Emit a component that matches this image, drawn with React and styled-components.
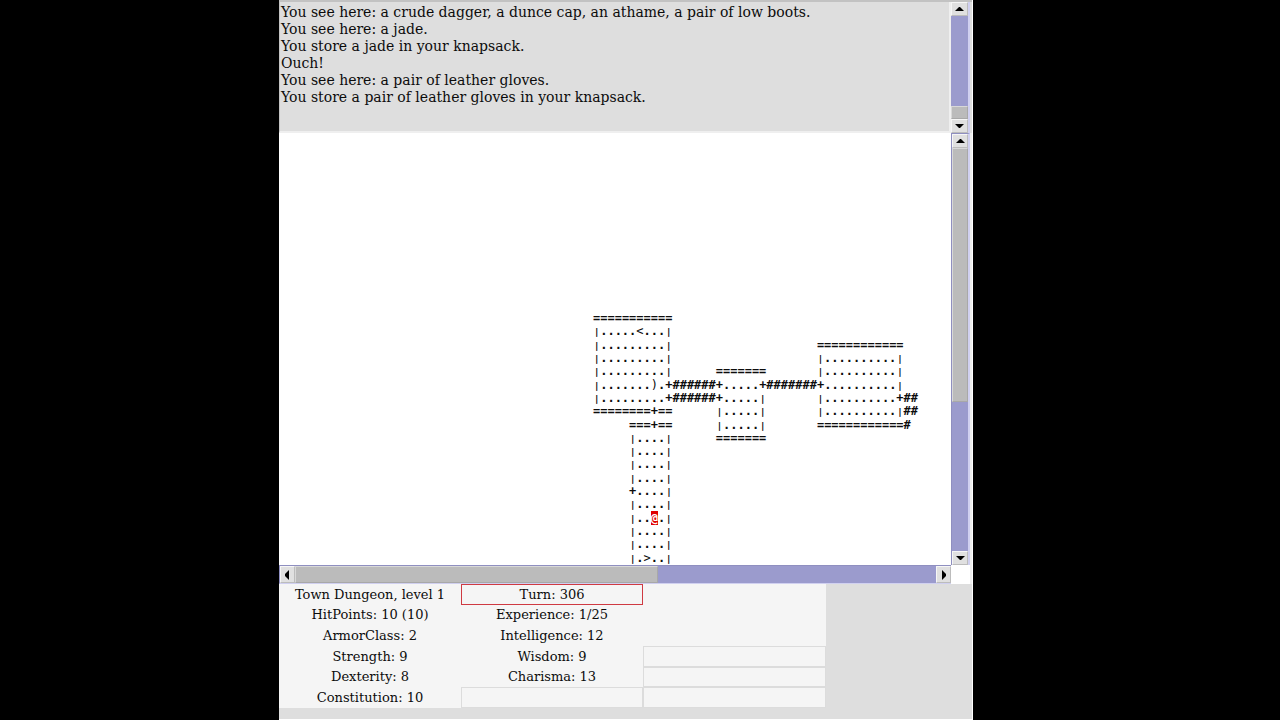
import React from "react";
import styled, { createGlobalStyle } from "styled-components";

const Global = createGlobalStyle`
  * { box-sizing: border-box; }
  body { margin: 0; background: #000; color: #0c0c0c; font-family: "DejaVu Serif", serif; }
`;

const Desktop = styled.div`
  display: grid;
  grid-template-columns: 279fr 694fr 307fr;
  min-height: 100vh;
`;

const GameWindow = styled.main`
  grid-column: 2;
  display: grid;
  grid-template-rows: 133px 1fr 136px;
  background: #dedede;
  border-right: 1px solid #fff;
`;

const MessagePane = styled.section`
  display: flex;
  border-top: 2px solid #c2c2c2;
  background: #dedede;
  padding-right: 2px;
`;

const MessageLog = styled.div`
  flex: 1;
  font-size: 14px;
  line-height: 17px;
  padding: 2px 0 0 1px;
  border-left: 1px solid #c2c2c2;
  border-right: 2px solid #efefef;
  border-bottom: 2px solid #efefef;
`;

const Message = styled.p`
  margin: 0;
  white-space: nowrap;
`;

const MapPane = styled.section`
  display: grid;
  grid-template-columns: 1fr 19px;
  grid-template-rows: 1fr 19px;
  padding-right: 2px;
  background: #efefef;
`;

const MapView = styled.div`
  overflow: hidden;
  height: calc(100vh - 288px);
  background: #fff;
`;

const Dungeon = styled.div`
  display: flex;
  flex-direction: column;
  height: 432px;
  padding: 179px 0 0 314px;
  font-family: "DejaVu Sans Mono", monospace;
  font-size: 12px;
  font-weight: bold;
  line-height: 13px;
`;

const MapRow = styled.div`
  flex: 1;
  white-space: pre;
`;

const Wall = styled.span`
  display: inline-block;
  width: 0.8em;
  font-size: 9px;
  line-height: 9px;
  text-align: center;
`;

const Thin = styled.span`
  font-weight: normal;
`;

const Hero = styled.span`
  background: #e00000;
  color: #fff;
`;

const Corner = styled.div`
  background: #fff;
`;

const Bar = styled.div`
  display: flex;
  flex-direction: ${(p) => (p.$horizontal ? "row" : "column")};
  width: ${(p) => (p.$horizontal ? "auto" : "19px")};
  background: #9b9bcd;
  border: 0 solid #8f8fc0;
  border-width: ${(p) => (p.$flat ? "0" : "1px 0 0 1px")};
  ${(p) => (p.$horizontal ? "border-bottom: 1px solid #d0d0f0;" : "border-right: 2px solid #d0d0f0;")}
`;

const ArrowButton = styled.button`
  flex: none;
  display: flex;
  align-items: center;
  justify-content: center;
  width: ${(p) => (p.$side ? "15px" : "100%")};
  height: ${(p) => (p.$side ? "100%" : "14px")};
  padding: 0;
  background: #e0e0e0;
  border: 1px solid;
  border-color: #f6f6f6 #bcbcbc #bcbcbc #f6f6f6;
`;

const Track = styled.div`
  flex: 1;
  display: flex;
  flex-direction: ${(p) => (p.$horizontal ? "row" : "column")};
`;

const Gap = styled.div`
  flex: ${(p) => p.$share};
`;

const Thumb = styled.div`
  flex: ${(p) => p.$share};
  background: #bbb;
  border: 1px solid;
  border-color: #d8d8d8 #a8a8a8 #a8a8a8 #d8d8d8;
`;

const arrows = {
  up: "M1 7 L5 3 H6 L10 7 Z",
  down: "M1 3 H10 L6 7 H5 Z",
  left: "M7 0 V10 L3 6 V4 Z",
  right: "M4 0 V10 L8 6 V4 Z",
};

function Arrow({ dir, label }) {
  return (
    <ArrowButton type="button" aria-label={label} $side={dir === "left" || dir === "right"}>
      <svg width="11" height="10" viewBox="0 0 11 10" aria-hidden="true">
        <path d={arrows[dir]} fill="#000" />
      </svg>
    </ArrowButton>
  );
}

function ScrollBar({ horizontal, flat, before, size, after, name }) {
  return (
    <Bar $horizontal={horizontal} $flat={flat}>
      <Arrow dir={horizontal ? "left" : "up"} label={`${name} back`} />
      <Track $horizontal={horizontal}>
        <Gap $share={before} />
        <Thumb $share={size} />
        <Gap $share={after} />
      </Track>
      <Arrow dir={horizontal ? "right" : "down"} label={`${name} forward`} />
    </Bar>
  );
}

const StatusPane = styled.section`
  padding-bottom: 11px;
  border-bottom: 1px solid #fff;
  display: grid;
  grid-template-columns: 182fr 182fr 183fr 146fr;
`;

const StatusColumn = styled.div`
  display: grid;
  grid-template-rows: repeat(6, 1fr);
  background: #f5f5f5;
  font-size: 13px;
  line-height: 17px;
`;

const frames = { turn: "#cf3a42", empty: "#dcdcdc" };

const Stat = styled.div`
  display: flex;
  align-items: center;
  justify-content: center;
  white-space: nowrap;
  border: 1px solid ${(p) => frames[p.$frame] || "transparent"};
`;

const messages = [
  "You see here: a crude dagger, a dunce cap, an athame, a pair of low boots.",
  "You see here: a jade.",
  "You store a jade in your knapsack.",
  "Ouch!",
  "You see here: a pair of leather gloves.",
  "You store a pair of leather gloves in your knapsack.",
];

const dungeon = [
  "===========",
  "|.....<...|",
  "|.........|                    ============",
  "|.........|                    |..........|",
  "|.........|      =======       |..........|",
  "|.......).+######+.....+#######+..........|",
  "|.........+######+.....|       |..........+##",
  "========+==      |.....|       |..........|##",
  "     ===+==      |.....|       ============#",
  "     |....|      =======",
  "     |....|",
  "     |....|",
  "     |....|",
  "     +....|",
  "     |....|",
  "     |..@.|",
  "     |....|",
  "     |....|",
  "     |.>..|",
];

const stats = [
  [
    { text: "Town Dungeon, level 1" },
    { text: "HitPoints: 10 (10)" },
    { text: "ArmorClass: 2" },
    { text: "Strength: 9" },
    { text: "Dexterity: 8" },
    { text: "Constitution: 10" },
  ],
  [
    { text: "Turn: 306", frame: "turn" },
    { text: "Experience: 1/25" },
    { text: "Intelligence: 12" },
    { text: "Wisdom: 9" },
    { text: "Charisma: 13" },
    { frame: "empty" },
  ],
  [{}, {}, {}, { frame: "empty" }, { frame: "empty" }, { frame: "empty" }],
];

function Tiles({ row }) {
  return row.split(/([|<>)@])/).map((part, i) => {
    if (part === "|") return <Wall key={i}>|</Wall>;
    if (part === "@") return <Hero key={i}>@</Hero>;
    if (part === "<" || part === ">" || part === ")") return <Thin key={i}>{part}</Thin>;
    return part;
  });
}

export default function App() {
  return (
    <Desktop>
      <Global />
      <GameWindow>
        <MessagePane>
          <MessageLog role="log">
            {messages.map((m) => (
              <Message key={m}>{m}</Message>
            ))}
          </MessageLog>
          <ScrollBar name="Messages" flat before={93} size={11} after={0} />
        </MessagePane>
        <MapPane>
          <MapView>
            <Dungeon>
              {dungeon.map((row, i) => (
                <MapRow key={i}>
                  <Tiles row={row} />
                </MapRow>
              ))}
            </Dungeon>
          </MapView>
          <ScrollBar name="Map rows" before={0} size={252} after={149} />
          <ScrollBar name="Map columns" horizontal before={0} size={362} after={279} />
          <Corner />
        </MapPane>
        <StatusPane>
          {stats.map((column, c) => (
            <StatusColumn key={c}>
              {column.map((s, r) => (
                <Stat key={r} $frame={s.frame}>
                  {s.text}
                </Stat>
              ))}
            </StatusColumn>
          ))}
        </StatusPane>
      </GameWindow>
    </Desktop>
  );
}
